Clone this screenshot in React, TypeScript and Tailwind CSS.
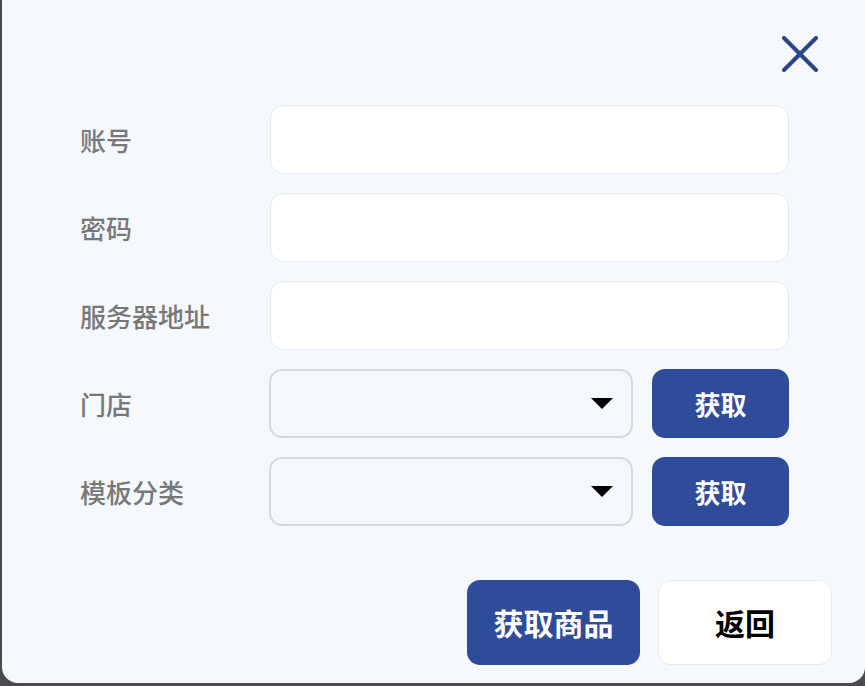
const font = { fontFamily: '"Noto Sans CJK SC", "Noto Sans", sans-serif' }

function TextRow({ label }: { label: string }) {
  return (
    <div className="flex items-center h-[69px]">
      <div className="w-[190px] text-[26px] font-medium text-[#787878]">{label}</div>
      <div className="w-[519px] h-[69px] bg-white border border-[#e6e9ef] rounded-[13px]" />
    </div>
  )
}

function SelectRow({ label }: { label: string }) {
  return (
    <div className="flex items-center h-[69px]">
      <div className="w-[189px] text-[26px] font-medium text-[#787878]">{label}</div>
      <div className="w-[364px] h-[69px] border-2 border-[#d6d9de] rounded-[13px] flex items-center justify-end pr-[18px]">
        <div className="w-0 h-0 border-l-[11px] border-r-[11px] border-t-[11px] border-l-transparent border-r-transparent border-t-black" />
      </div>
      <button className="ml-[19px] w-[137px] h-[69px] rounded-[13px] bg-[#2f4c9a] text-white text-[26px] font-bold">获取</button>
    </div>
  )
}

export default function App() {
  return (
    <div style={font} className="w-[865px] h-[686px] bg-[#4b4b4d] flex">
      <div className="ml-[2px] mb-[3px] flex-1 bg-[#f5f9fe] rounded-bl-[16px] rounded-br-[16px] flex flex-col">
        <div className="flex justify-end pt-[36px] pr-[47px]">
          <svg width="36" height="36" viewBox="0 0 36 36" className="text-[#2d4585]">
            <path d="M2 2 L34 34 M34 2 L2 34" stroke="currentColor" strokeWidth="4" strokeLinecap="round" />
          </svg>
        </div>
        <div className="mt-[33px] pl-[78px] flex flex-col gap-[19px]">
          <TextRow label="账号" />
          <TextRow label="密码" />
          <TextRow label="服务器地址" />
          <SelectRow label="门店" />
          <SelectRow label="模板分类" />
        </div>
        <div className="mt-[54px] flex justify-end gap-[18px] pr-[33px]">
          <button className="w-[173px] h-[85px] rounded-[13px] bg-[#2f4c9a] text-white text-[30px] font-bold">获取商品</button>
          <button className="w-[174px] h-[85px] rounded-[13px] bg-white border border-[#e6e9ef] text-black text-[30px] font-bold">返回</button>
        </div>
      </div>
    </div>
  )
}
